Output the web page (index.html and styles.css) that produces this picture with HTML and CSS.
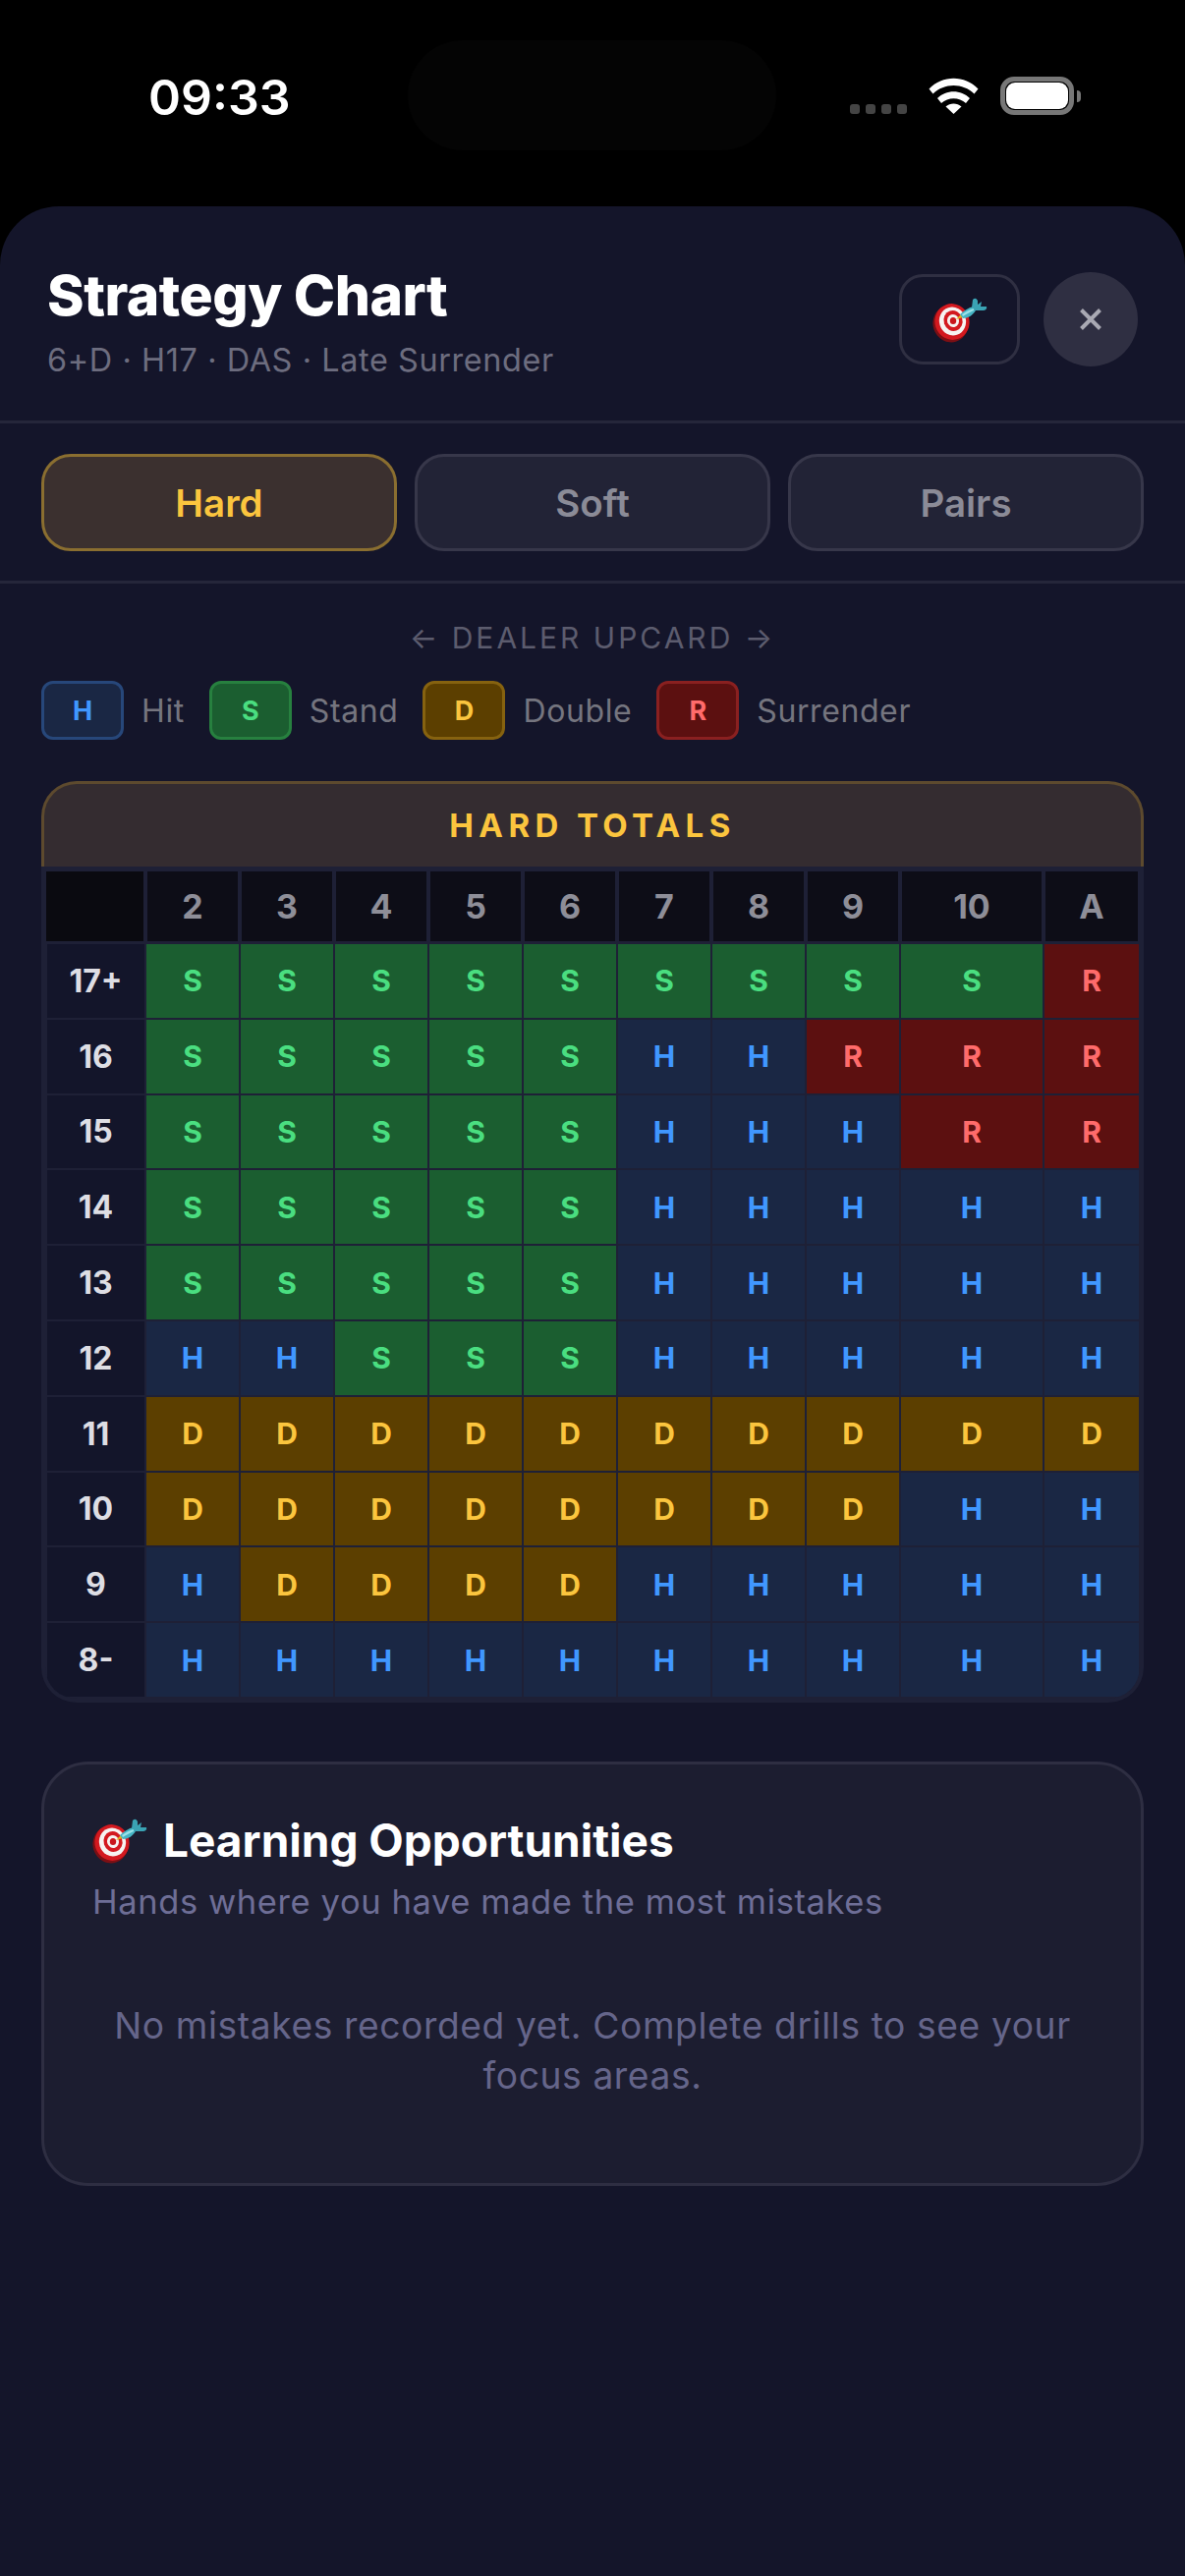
FILE: index.html
```html
<!DOCTYPE html>
<html lang="en">
<head>
  <meta charset="UTF-8" />
  <title>Strategy Chart</title>
  <link rel="stylesheet" href="styles.css">
</head>
<body>
  <svg class="defs" width="0" height="0" aria-hidden="true">
    <symbol id="dartTarget" viewBox="0 0 56 48">
      <ellipse cx="18.5" cy="28.5" rx="18" ry="19" fill="#7c0f14" transform="rotate(-18 18.5 28.5)" />
      <ellipse cx="20" cy="26.5" rx="17.5" ry="18.5" fill="#d3191f" transform="rotate(-18 20 26.5)" />
      <ellipse cx="20.5" cy="26" rx="13.5" ry="14.5" fill="#f6f3f1" transform="rotate(-18 20.5 26)" />
      <ellipse cx="21" cy="25.5" rx="9.5" ry="10.5" fill="#d3191f" transform="rotate(-18 21 25.5)" />
      <ellipse cx="21" cy="25.5" rx="6" ry="6.5" fill="#f6f3f1" transform="rotate(-18 21 25.5)" />
      <ellipse cx="21" cy="25.5" rx="3.2" ry="3.5" fill="#c9161c" />
      <path d="M24 24 L29 19 L31 22 Z" fill="#e2b21c" />
      <path d="M28 19 C32 15 37 12 42 11 L44 15 C41 20 36 23 31 23 Z" fill="#46b4c4" />
      <path d="M30 19 C34 16 38 14 42 13 L42 15 C38 17 34 19 31 21 Z" fill="#9be2e8" />
      <path d="M40 12 L41 4 Q44 1 46 5 L46 9 L50 6 L49 11 L55 11 Q56 14 52 15 L44 15 Z" fill="#3aa3b4" />
    </symbol>
  </svg>

  <div class="status-bar">
    <span class="clock">09:33</span>
    <div class="island"></div>
    <div class="signal">
      <span class="signal-dot"></span>
      <span class="signal-dot"></span>
      <span class="signal-dot"></span>
      <span class="signal-dot"></span>
    </div>
    <svg class="wifi" viewBox="0 0 51 37">
      <path d="M0.5 11.5 C14 -3 37 -3 50.5 11.5 L46.5 16.5 C35 5 16 5 4.5 16.5 Z" fill="#fff" />
      <path d="M9 21 C18 12 33 12 42 21 L38 26 C31 19.500 20 19.500 13 26 Z" fill="#fff" />
      <path d="M17.500 29.500 C22 25.500 29 25.500 33.500 29.500 L25.500 37 Z" fill="#fff" />
    </svg>
    <div class="battery"><div class="battery-fill"></div></div>
    <div class="battery-nub"></div>
  </div>

  <main class="sheet">
    <header class="sheet-header">
      <div class="sheet-titles">
        <h1>Strategy Chart</h1>
        <p class="rules">6+D · H17 · DAS · Late Surrender</p>
      </div>
      <button class="focus-btn"><svg class="dart-icon"><use href="#dartTarget" /></svg></button>
      <button class="close-btn">
        <svg viewBox="0 0 22 22" width="22" height="22">
          <path d="M1.500 1.500 L20.500 20.500 M20.500 1.500 L1.500 20.500" stroke="#a9a9b3" stroke-width="4" />
        </svg>
      </button>
    </header>

    <nav class="tabs">
      <button class="tab active">Hard</button>
      <button class="tab">Soft</button>
      <button class="tab">Pairs</button>
    </nav>

    <section class="chart-area">
      <div class="upcard-label">← DEALER UPCARD →</div>

      <div class="legend">
        <span class="chip hit">H</span><span class="legend-name">Hit</span>
        <span class="chip stand">S</span><span class="legend-name">Stand</span>
        <span class="chip double">D</span><span class="legend-name">Double</span>
        <span class="chip surrender">R</span><span class="legend-name">Surrender</span>
      </div>

      <div class="chart-title">HARD TOTALS</div>
      <div class="chart">
        <div class="head corner"></div>
        <div class="head">2</div><div class="head">3</div><div class="head">4</div><div class="head">5</div><div class="head">6</div><div class="head">7</div><div class="head">8</div><div class="head">9</div><div class="head">10</div><div class="head">A</div>

        <div class="row-label">17+</div>
        <div class="cell stand">S</div><div class="cell stand">S</div><div class="cell stand">S</div><div class="cell stand">S</div><div class="cell stand">S</div><div class="cell stand">S</div><div class="cell stand">S</div><div class="cell stand">S</div><div class="cell stand">S</div><div class="cell surrender">R</div>

        <div class="row-label">16</div>
        <div class="cell stand">S</div><div class="cell stand">S</div><div class="cell stand">S</div><div class="cell stand">S</div><div class="cell stand">S</div><div class="cell hit">H</div><div class="cell hit">H</div><div class="cell surrender">R</div><div class="cell surrender">R</div><div class="cell surrender">R</div>

        <div class="row-label">15</div>
        <div class="cell stand">S</div><div class="cell stand">S</div><div class="cell stand">S</div><div class="cell stand">S</div><div class="cell stand">S</div><div class="cell hit">H</div><div class="cell hit">H</div><div class="cell hit">H</div><div class="cell surrender">R</div><div class="cell surrender">R</div>

        <div class="row-label">14</div>
        <div class="cell stand">S</div><div class="cell stand">S</div><div class="cell stand">S</div><div class="cell stand">S</div><div class="cell stand">S</div><div class="cell hit">H</div><div class="cell hit">H</div><div class="cell hit">H</div><div class="cell hit">H</div><div class="cell hit">H</div>

        <div class="row-label">13</div>
        <div class="cell stand">S</div><div class="cell stand">S</div><div class="cell stand">S</div><div class="cell stand">S</div><div class="cell stand">S</div><div class="cell hit">H</div><div class="cell hit">H</div><div class="cell hit">H</div><div class="cell hit">H</div><div class="cell hit">H</div>

        <div class="row-label">12</div>
        <div class="cell hit">H</div><div class="cell hit">H</div><div class="cell stand">S</div><div class="cell stand">S</div><div class="cell stand">S</div><div class="cell hit">H</div><div class="cell hit">H</div><div class="cell hit">H</div><div class="cell hit">H</div><div class="cell hit">H</div>

        <div class="row-label">11</div>
        <div class="cell double">D</div><div class="cell double">D</div><div class="cell double">D</div><div class="cell double">D</div><div class="cell double">D</div><div class="cell double">D</div><div class="cell double">D</div><div class="cell double">D</div><div class="cell double">D</div><div class="cell double">D</div>

        <div class="row-label">10</div>
        <div class="cell double">D</div><div class="cell double">D</div><div class="cell double">D</div><div class="cell double">D</div><div class="cell double">D</div><div class="cell double">D</div><div class="cell double">D</div><div class="cell double">D</div><div class="cell hit">H</div><div class="cell hit">H</div>

        <div class="row-label">9</div>
        <div class="cell hit">H</div><div class="cell double">D</div><div class="cell double">D</div><div class="cell double">D</div><div class="cell double">D</div><div class="cell hit">H</div><div class="cell hit">H</div><div class="cell hit">H</div><div class="cell hit">H</div><div class="cell hit">H</div>

        <div class="row-label">8-</div>
        <div class="cell hit">H</div><div class="cell hit">H</div><div class="cell hit">H</div><div class="cell hit">H</div><div class="cell hit">H</div><div class="cell hit">H</div><div class="cell hit">H</div><div class="cell hit">H</div><div class="cell hit">H</div><div class="cell hit">H</div>
      </div>

      <div class="learning-card">
        <h2><svg class="dart-icon"><use href="#dartTarget" /></svg>Learning Opportunities</h2>
        <p class="learning-sub">Hands where you have made the most mistakes</p>
        <p class="learning-empty">No mistakes recorded yet. Complete drills to see your focus areas.</p>
      </div>
    </section>
  </main>
</body>
</html>
```

FILE: styles.css
```css
/* BODY & GLOBAL STYLES */
html, body {
  margin: 0;
  padding: 0;
  height: 100%;
}
body {
  font-family: Inter, 'Noto Sans', Arial, sans-serif;
  background-color: #000;
  color: #fff;
  display: flex;
  flex-direction: column;
  overflow: hidden;
}
.defs {
  display: block;
  height: 0;
}
button {
  font-family: inherit;
  padding: 0;
  cursor: pointer;
}

/* STATUS BAR */
.status-bar {
  height: 210px;
  flex: none;
  display: flex;
  align-items: flex-start;
  box-sizing: border-box;
  padding-left: 151px;
}
.clock {
  width: 264px;
  margin-top: 71px;
  font-size: 50px;
  line-height: 56px;
  font-weight: 600;
}
.island {
  width: 375px;
  height: 112px;
  margin-top: 41px;
  border-radius: 56px;
  background-color: #040404;
}
.signal {
  display: flex;
  gap: 6px;
  margin: 106px 0 0 75px;
}
.signal-dot {
  width: 10px;
  height: 10px;
  border-radius: 3px;
  background-color: #444;
}
.wifi {
  width: 51px;
  height: 37px;
  margin: 79px 0 0 22px;
}
.battery {
  width: 75px;
  height: 39px;
  box-sizing: border-box;
  margin: 78px 0 0 22px;
  padding: 1px;
  border: 5px solid #777;
  border-radius: 14px;
}
.battery-fill {
  height: 100%;
  border-radius: 9px;
  background-color: #fff;
}
.battery-nub {
  width: 4px;
  height: 12px;
  margin: 92px 0 0 3px;
  border-radius: 0 6px 6px 0;
  background-color: #777;
}

/* SHEET */
.sheet {
  flex: 1;
  background-color: #14152a;
  border-radius: 60px 60px 0 0;
}
.sheet-header {
  height: 221px;
  box-sizing: border-box;
  display: flex;
  align-items: center;
  padding: 11px 48px 0 48px;
  border-bottom: 3px solid #25263a;
}
.sheet-titles {
  flex: 1;
  margin-top: 6px;
}
h1 {
  margin: 0;
  font-size: 57px;
  line-height: 66px;
  font-weight: 800;
  letter-spacing: -0.5px;
}
.rules {
  margin: 13px 0 0;
  font-size: 32.4px;
  line-height: 40px;
  letter-spacing: 0.6px;
  color: #6d6d7f;
}
.focus-btn {
  width: 123px;
  height: 92px;
  margin-right: 24px;
  border: 3px solid #2f2f42;
  border-radius: 24px;
  background: none;
  display: flex;
  align-items: center;
  justify-content: center;
}
.close-btn {
  width: 96px;
  height: 96px;
  border: none;
  border-radius: 50%;
  background-color: #2f2f42;
  display: flex;
  align-items: center;
  justify-content: center;
}
.dart-icon {
  width: 56px;
  height: 48px;
}

/* TABS */
.tabs {
  display: flex;
  gap: 18px;
  padding: 31px 42px 30px;
  border-bottom: 3px solid #25263a;
}
.tab {
  flex: 1;
  height: 99px;
  border: 3px solid #37374a;
  border-radius: 30px;
  background-color: #222336;
  color: #8b8b97;
  font-size: 38.5px;
  font-weight: 600;
}
.tab.active {
  background-color: #3b302f;
  border-color: #8a6e30;
  color: #fbc53e;
}

/* CHART AREA */
.chart-area {
  padding: 0 42px;
}
.upcard-label {
  margin-top: 40px;
  font-size: 30px;
  line-height: 30px;
  letter-spacing: 3px;
  text-align: center;
  color: #5c5c6e;
}

/* LEGEND */
.legend {
  display: flex;
  align-items: center;
  margin-top: 29px;
  height: 60px;
}
.chip {
  width: 84px;
  height: 60px;
  box-sizing: border-box;
  display: flex;
  align-items: center;
  justify-content: center;
  border: 3px solid;
  border-radius: 12px;
  font-size: 27px;
  font-weight: 700;
}
.chip.hit { border-color: #27477a; }
.chip.stand { border-color: #27803f; }
.chip.double { border-color: #86620f; }
.chip.surrender { border-color: #8a2020; }
.legend-name {
  margin: 0 25px 0 18px;
  font-size: 32px;
  letter-spacing: 0.6px;
  color: #75757f;
}

/* STRATEGY COLOURS */
.hit { background-color: #1a2744; color: #4097ff; }
.stand { background-color: #1b5e30; color: #4ade80; }
.double { background-color: #5c3f00; color: #fbc53e; }
.surrender { background-color: #5c1010; color: #ff6b6b; }

/* CHART TABLE */
.chart-title {
  margin-top: 42px;
  height: 87px;
  box-sizing: border-box;
  border: 3px solid #5d4a2e;
  border-bottom: none;
  border-radius: 36px 36px 0 0;
  background-color: #342c30;
  color: #fbc53e;
  font-size: 33px;
  line-height: 84px;
  font-weight: 700;
  letter-spacing: 5.4px;
  text-align: center;
}
.chart {
  display: grid;
  grid-template-columns: 101px repeat(8, 94px) 144px 96px;
  grid-template-rows: 72px repeat(10, 74.8px);
  gap: 2px;
  box-sizing: border-box;
  height: 851px;
  padding: 2px 1px 1px 0;
  border: 4px solid #1e2036;
  border-top-width: 3px;
  border-radius: 0 0 36px 36px;
  background-color: #1e2036;
  overflow: hidden;
}
.head {
  display: flex;
  align-items: center;
  justify-content: center;
  margin: 0 1px 1px;
  background-color: #0d0d17;
  color: #8e8e98;
  font-size: 34px;
  font-weight: 700;
}
.corner {
  background-color: #0a0a10;
}
.row-label {
  display: flex;
  align-items: center;
  justify-content: center;
  margin-left: 2px;
  background-color: #13152a;
  color: #dedee4;
  font-size: 32px;
  font-weight: 700;
}
.cell {
  display: flex;
  align-items: center;
  justify-content: center;
  font-size: 30px;
  font-weight: 700;
}

/* LEARNING CARD */
.learning-card {
  margin-top: 60px;
  height: 432px;
  box-sizing: border-box;
  padding: 50px 49px 0;
  border: 3px solid #2e2e42;
  border-radius: 48px;
  background-color: #1c1d30;
}
h2 {
  margin: 0;
  display: flex;
  align-items: center;
  gap: 16px;
  font-size: 46px;
  line-height: 54px;
  font-weight: 700;
}
.learning-sub {
  margin: 14px 0 0;
  font-size: 34.5px;
  line-height: 44px;
  letter-spacing: 0.6px;
  color: #6e6e96;
}
.learning-empty {
  margin: 78px 0 0;
  font-size: 37.2px;
  line-height: 51px;
  letter-spacing: 0.6px;
  text-align: center;
  color: #65658a;
}
```
